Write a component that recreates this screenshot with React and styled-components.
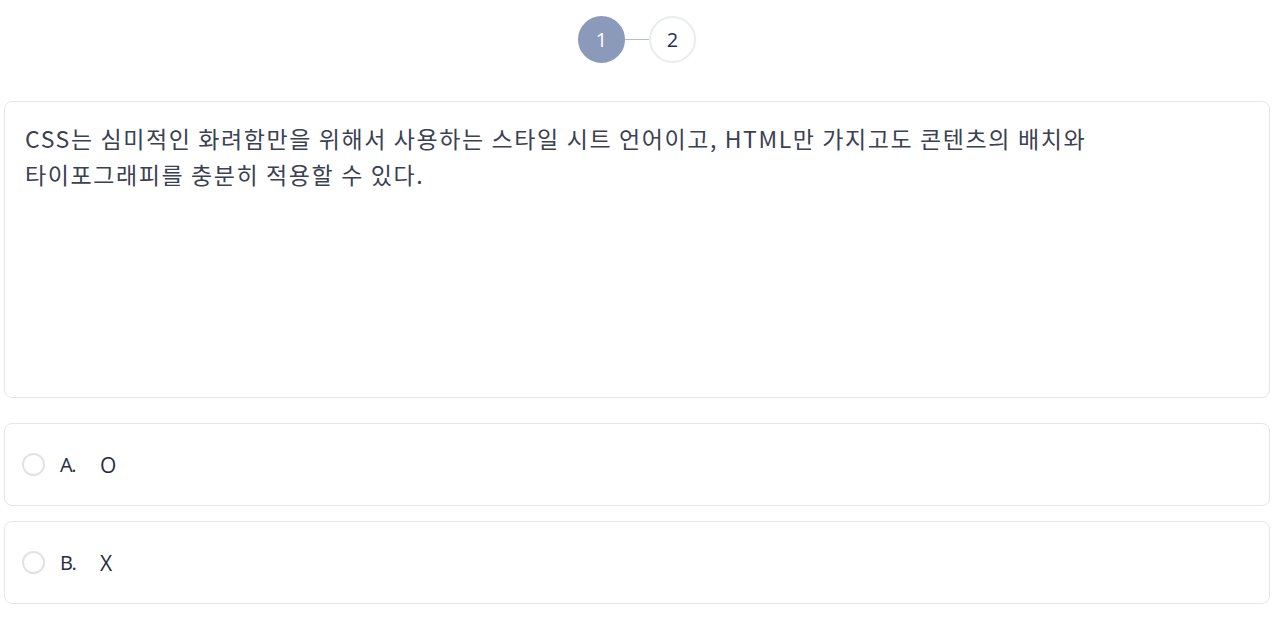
import styled, { createGlobalStyle } from 'styled-components';

const GlobalStyle = createGlobalStyle`
  body {
    margin: 0;
    background: #ffffff;
    font-family: "Noto Sans CJK KR", "Noto Sans", sans-serif;
    color: #3a4152;
  }
`

const Page = styled.div`
  display: flex;
  flex-direction: column;
  padding: 16px 10px 0 4px;
`

const Steps = styled.div`
  display: flex;
  justify-content: center;
  align-items: center;
  margin-bottom: 38px;
`

const Step = styled.div`
  width: 47px;
  height: 47px;
  border-radius: 50%;
  box-sizing: border-box;
  display: flex;
  align-items: center;
  justify-content: center;
  font-family: "Open Sans", sans-serif;
  font-size: 20px;
  background: ${p => (p.active ? '#8b9aba' : '#ffffff')};
  color: ${p => (p.active ? '#ffffff' : '#263150')};
  border: 2px solid ${p => (p.active ? '#8b9aba' : '#e8ebf2')};
`

const Link = styled.div`
  width: 24px;
  height: 1px;
  background: #b8bcc6;
`

const Card = styled.div`
  border: 1px solid #e3e6ec;
  border-radius: 8px;
  background: #fff;
  box-sizing: border-box;
`

const Question = styled(Card)`
  min-height: 297px;
  padding: 18px 20px;
  font-size: 23px;
  line-height: 36px;
  letter-spacing: 1.6px;
  word-break: keep-all;
  margin-bottom: 25px;
`

const Options = styled.div`
  display: flex;
  flex-direction: column;
  gap: 15px;
`

const Option = styled(Card)`
  height: 83px;
  display: flex;
  align-items: center;
  padding: 0 17px;
  cursor: pointer;
`

const Radio = styled.span`
  width: 23px;
  height: 23px;
  box-sizing: border-box;
  border-radius: 50%;
  border: 2px solid #e2e2e2;
  margin-right: 15px;
`

const Letter = styled.span`
  font-family: "Open Sans", sans-serif;
  font-size: 20px;
  letter-spacing: -1.5px;
  color: #252d40;
  width: 40px;
`

const Answer = styled.span`
  font-family: "Open Sans", sans-serif;
  font-size: 21px;
  color: #252d40;
`

const options = [
  { key: 'A.', text: 'O' },
  { key: 'B.', text: 'X' },
]

const App = () => {
  return (
    <Page>
      <GlobalStyle />
      <Steps>
        <Step active>1</Step>
        <Link />
        <Step>2</Step>
      </Steps>
      <Question>
        CSS는 심미적인 화려함만을 위해서 사용하는 스타일 시트 언어이고, HTML만 가지고도 콘텐츠의 배치와 타이포그래피를 충분히 적용할 수 있다.
      </Question>
      <Options>
        {options.map(o => (
          <Option key={o.key}>
            <Radio />
            <Letter>{o.key}</Letter>
            <Answer>{o.text}</Answer>
          </Option>
        ))}
      </Options>
    </Page>
  )
}

export default App
